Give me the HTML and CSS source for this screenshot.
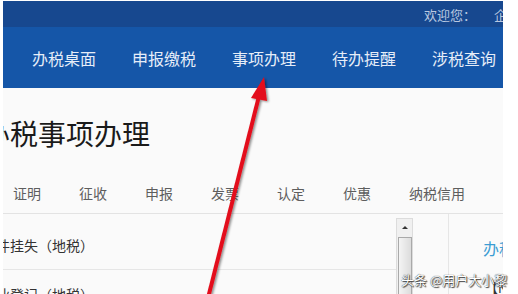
FILE: index.html
```html
<!DOCTYPE html>
<html lang="zh-CN">
<head>
    <meta charset="UTF-8">
    <title>办税事项办理</title>
    <link rel="stylesheet" href="styles.css">
</head>
<body>
    <div class="frame">
        <div class="topbar">
            <span class="welcome">欢迎您：</span>
            <span class="company">企业用户</span>
        </div>
        <nav class="nav">
            <a>办税桌面</a>
            <a>申报缴税</a>
            <a>事项办理</a>
            <a>待办提醒</a>
            <a>涉税查询</a>
        </nav>

        <h1 class="title">办税事项办理</h1>

        <ul class="tabs">
            <li>证明</li>
            <li>征收</li>
            <li>申报</li>
            <li>发票</li>
            <li>认定</li>
            <li>优惠</li>
            <li>纳税信用</li>
        </ul>

        <div class="content">
            <ul class="list">
                <li>证件挂失（地税）</li>
                <li>停业登记（地税）</li>
            </ul>
            <div class="scrollbar">
                <span class="scroll-up"></span>
                <span class="scroll-thumb"></span>
            </div>
            <div class="side">
                <div class="side-title">办税指南</div>
                <div class="side-item">【NEW】</div>
            </div>
        </div>
    </div>

    <!-- red annotation arrow over the screenshot -->
    <svg class="arrow" width="518" height="294" viewBox="0 0 518 294">
        <defs>
            <filter id="shade" x="-50%" y="-10%" width="200%" height="120%">
                <feDropShadow dx="1.5" dy="1" stdDeviation="1" flood-color="#000" flood-opacity="0.45"/>
            </filter>
        </defs>
        <g filter="url(#shade)" fill="#e3111b">
            <line x1="259" y1="96" x2="207" y2="302" stroke="#e3111b" stroke-width="4"/>
            <polygon points="264,77 251,98 267,101"/>
        </g>
    </svg>

    <div class="watermark">头条 @用户大小黎</div>
</body>
</html>
```

FILE: styles.css
```css
body {
    margin: 0;
    background: #fff;
    font-family: "Noto Sans CJK SC", "Noto Sans", sans-serif;
    position: relative;
    width: 518px;
    height: 294px;
    overflow: hidden;
}
.frame {
    margin: 1px 0 0 3px;
    width: 500px;
    height: 293px;
    overflow: hidden;
    background: #fafafa;
}
.topbar {
    height: 26px;
    background: #17488f;
    display: flex;
    align-items: center;
    padding-left: 421px;
    font-size: 13px;
    color: #b9c8e0;
    white-space: nowrap;
}
.company {
    margin-left: 18px;
}
.nav {
    height: 61px;
    background: #1556a8;
    display: flex;
    align-items: center;
    gap: 36px;
    padding-left: 29px;
    font-size: 16px;
    color: #e6edf8;
    white-space: nowrap;
}
.title {
    margin: 29px 0 0 -21px;
    font-size: 28px;
    line-height: 32px;
    font-weight: normal;
    color: #1a1a1a;
    white-space: nowrap;
}
.tabs {
    list-style: none;
    margin: 24px 0 0;
    padding: 0 0 0 10px;
    height: 40px;
    display: flex;
    gap: 38px;
    font-size: 14px;
    line-height: 40px;
    color: #5e5e5e;
    border-bottom: 1px solid #e3e3e3;
}
.content {
    display: flex;
    height: 80px;
}
.list {
    list-style: none;
    margin: 0;
    padding: 7px 0 0;
    width: 393px;
    overflow: hidden;
    font-size: 14px;
    color: #333;
}
.list li {
    height: 48px;
    line-height: 48px;
    text-indent: -21px;
    white-space: nowrap;
    border-bottom: 1px solid #e6e6e6;
}
.scrollbar {
    margin-top: 4px;
    width: 15px;
    background: #f0f0f0;
    border: 1px solid #dcdcdc;
    border-bottom: none;
    display: flex;
    flex-direction: column;
    align-items: center;
}
.scroll-up {
    width: 0;
    height: 0;
    margin-top: 7px;
    border-left: 3px solid transparent;
    border-right: 3px solid transparent;
    border-bottom: 3px solid #333;
}
.scroll-thumb {
    margin-top: 8px;
    width: 12px;
    flex: 1;
    border: 1px solid #a9a9a9;
    border-bottom: none;
    background: linear-gradient(to right, #f4f4f4, #dcdcdc);
}
.side {
    margin-left: 35px;
    flex: 1;
    border-left: 1px solid #e6e6e6;
    padding-left: 34px;
    white-space: nowrap;
    overflow: hidden;
}
.side-title {
    margin-top: 24px;
    font-size: 16px;
    line-height: 20px;
    color: #3b9dd3;
}
.side-item {
    margin-top: 20px;
    margin-left: 2px;
    font-size: 13px;
    color: #333;
}
.arrow {
    position: absolute;
    left: 0;
    top: 0;
    pointer-events: none;
}
.watermark {
    position: absolute;
    left: 401px;
    top: 271px;
    font-size: 13px;
    line-height: 18px;
    color: #fff;
    white-space: nowrap;
    text-shadow: 0 0 1px #000, 1px 1px 1px #444;
}
```
